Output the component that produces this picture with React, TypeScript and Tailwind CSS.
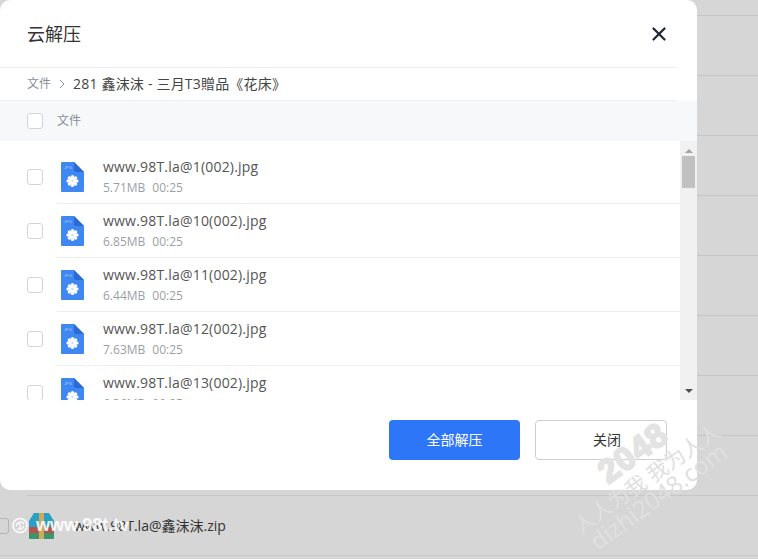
import { X } from "lucide-react";

const files = [
  { name: "www.98T.la@1(002).jpg", size: "5.71MB" },
  { name: "www.98T.la@10(002).jpg", size: "6.85MB" },
  { name: "www.98T.la@11(002).jpg", size: "6.44MB" },
  { name: "www.98T.la@12(002).jpg", size: "7.63MB" },
  { name: "www.98T.la@13(002).jpg", size: "6.36MB" },
];

const JpgIcon = () => (
  <svg width="23" height="30" viewBox="0 0 23 30" className="shrink-0">
    <path d="M1 0H13L23 10V29a1 1 0 0 1-1 1H1a1 1 0 0 1-1-1V1a1 1 0 0 1 1-1z" fill="#3f87f2" />
    <path d="M13 0L23 10H15a2 2 0 0 1-2-2z" fill="#2a6bd6" />
    <text x="3" y="6.5" fontSize="4" fill="#a9ccfb" fontFamily="Liberation Sans, sans-serif">JPG</text>
    <g fill="#fff">
      <circle cx="11.5" cy="19" r="3.6" />
      <circle cx="11.5" cy="14.6" r="1.7" />
      <circle cx="11.5" cy="23.4" r="1.7" />
      <circle cx="7.1" cy="19" r="1.7" />
      <circle cx="15.9" cy="19" r="1.7" />
      <circle cx="8.4" cy="15.9" r="1.7" />
      <circle cx="14.6" cy="15.9" r="1.7" />
      <circle cx="8.4" cy="22.1" r="1.7" />
      <circle cx="14.6" cy="22.1" r="1.7" />
    </g>
    <circle cx="11.5" cy="19" r="1.3" fill="#cfe0fb" />
  </svg>
);

const ZipIcon = () => (
  <svg width="25" height="26" viewBox="0 0 25 26" className="shrink-0">
    <path d="M5 0H20L25 8V14H0V8z" fill="#2b9fc4" />
    <rect y="14" width="25" height="6" fill="#b8524c" />
    <path d="M0 20H25V25a1 1 0 0 1-1 1H1a1 1 0 0 1-1-1z" fill="#3b9569" />
    <rect x="10" y="0" width="5" height="26" fill="#c9ad5e" />
  </svg>
);

const Checkbox = () => (
  <div className="h-4 w-4 shrink-0 rounded-[3px] border border-[#d2d4d8] bg-white" />
);

export default function App() {
  return (
    <div
      className="relative h-[559px] w-[758px] overflow-hidden bg-[#d6d6d6]"
      style={{ fontFamily: '"Open Sans", "Noto Sans CJK SC", sans-serif' }}
    >
      {/* page behind the dialog */}
      <div className="-mt-[44px] flex flex-col">
        {Array.from({ length: 9 }).map((_, i) => (
          <div key={i} className="ml-[26px] h-[60px] border-b border-[#c6c6c6]" />
        ))}
        <div className="flex h-[60px] items-center border-b border-[#c6c6c6]">
          <div className="-ml-[7px] h-4 w-4 shrink-0 rounded-[3px] border border-[#b4b4b4]" />
          <div className="ml-5">
            <ZipIcon />
          </div>
          <span className="pl-5 text-sm text-[#333]">www.98T.la@鑫沫沫.zip</span>
        </div>
      </div>

      {/* dialog */}
      <div className="absolute left-0 top-0 flex h-[490px] w-[697px] flex-col rounded-[10px] bg-white">
        <div className="mr-5 flex h-[68px] shrink-0 items-center justify-between border-b border-[#eceef0] pl-[27px] pr-[7px]">
          <span className="text-lg text-[#333]">云解压</span>
          <X size={22} strokeWidth={2.5} className="text-[#1f2a37]" />
        </div>
        <div className="mr-5 flex h-[33px] shrink-0 items-center border-b border-[#eceef0] pl-[27px] text-sm tracking-[0.2px] text-[#444]">
          <span className="text-xs tracking-normal text-[#8a8f97]">文件</span>
          <svg width="8" height="10" viewBox="0 0 8 10" className="ml-[7px] mr-[7px]">
            <path d="M2 1l4 4-4 4" fill="none" stroke="#8a8f97" strokeWidth="1" />
          </svg>
          <span>281 鑫沫沫 - 三月T3贈品《花床》</span>
        </div>
        <div className="flex h-10 shrink-0 items-center gap-[14px] bg-[#f7f8fa] pl-[27px]">
          <Checkbox />
          <span className="text-xs text-[#8a8f97]">文件</span>
        </div>
        <div className="flex h-[259px] shrink-0">
          <div className="flex-1 overflow-hidden pt-[9px]">
            {files.map((f) => (
              <div key={f.name} className="flex h-[54px] shrink-0 items-center pl-[27px]">
                <Checkbox />
                <div className="ml-[14px] flex h-full flex-1 items-center gap-[19px] border-b border-[#eceef0] pl-1">
                  <JpgIcon />
                  <div className="flex flex-col">
                    <span className="text-sm leading-5 tracking-[0.2px] text-[#555]">{f.name}</span>
                    <span className="mt-[3px] flex gap-[7px] text-xs leading-4 text-[#9a9fa6]">
                      <span>{f.size}</span>
                      <span>00:25</span>
                    </span>
                  </div>
                </div>
              </div>
            ))}
          </div>
          <div className="flex w-[17px] shrink-0 flex-col items-center bg-[#f1f1f1]">
            <div className="mt-[8px] h-0 w-0 border-x-[4px] border-b-[4px] border-x-transparent border-b-[#a3a3a3]" />
            <div className="mt-[3px] h-8 w-[13px] bg-[#c1c1c1]" />
            <div className="mt-auto mb-[7px] h-0 w-0 border-x-[4px] border-t-[4px] border-x-transparent border-t-[#505050]" />
          </div>
        </div>
        <div className="flex flex-1 items-start justify-end gap-[15px] pr-[30px] pt-5">
          <button className="h-10 w-[131px] rounded-[4px] bg-[#2d76f8] text-sm text-white">全部解压</button>
          <button className="h-10 w-[132px] rounded-[4px] border border-[#cfcfcf] bg-white pl-3 text-sm text-[#333]">关闭</button>
        </div>
      </div>

      {/* watermarks */}
      <span
        className="absolute left-[12px] top-[515px] flex items-center gap-[8px] text-[18px] font-bold leading-5 text-white/90"
        style={{ fontFamily: '"Liberation Sans", sans-serif' }}
      >
        <svg width="16" height="17" viewBox="0 0 16 17">
          <circle cx="8" cy="8.5" r="7" fill="none" stroke="#fff" strokeWidth="1.5" />
          <path d="M4 9c1-4 6-5 8-2M5 12c3 1 6 0 7-3M6 6c2 1 3 3 2 6" fill="none" stroke="#fff" strokeWidth="1.2" />
        </svg>
        www.98t.tv
      </span>
      <span
        className="absolute left-[594px] top-[436px] -rotate-[36deg] text-[33px] font-bold leading-none tracking-[1px] text-[#e3e3e3] [-webkit-text-stroke:2px_#e3e3e3]"
        style={{ fontFamily: '"Liberation Sans", sans-serif' }}
      >
        2048
      </span>
      <span className="absolute left-[560px] top-[468px] -rotate-[35deg] whitespace-nowrap text-[21px] leading-none text-[#e0e0e0]">
        人人为我 我为人人
      </span>
      <span className="absolute left-[577px] top-[484px] -rotate-[36deg] whitespace-nowrap text-[24px] leading-none text-[#e0e0e0]">
        dizhi2048.com
      </span>
    </div>
  );
}
